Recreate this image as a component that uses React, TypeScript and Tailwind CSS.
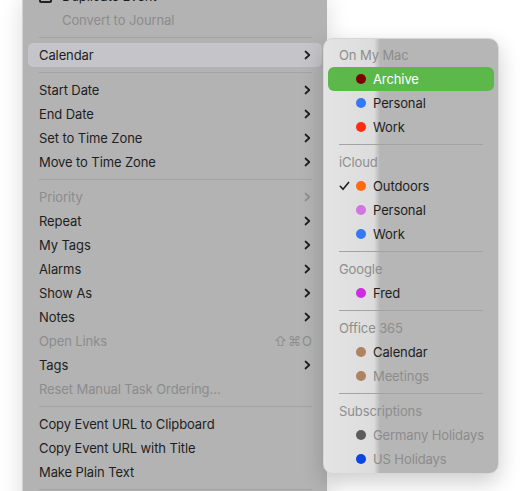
import clsx from "clsx"

const font = "font-['Inter','Liberation_Sans',sans-serif]"

function Chevron({ dim }: { dim?: boolean }) {
  return (
    <svg width="7" height="10" viewBox="0 0 7 10" className="shrink-0">
      <polyline
        points="1.5,1.5 5.3,5 1.5,8.5"
        fill="none"
        stroke={dim ? "#8f8f8f" : "#1e1e1e"}
        strokeWidth="1.7"
        strokeLinecap="round"
        strokeLinejoin="round"
      />
    </svg>
  )
}

function Item({
  label,
  disabled,
  sub,
  shortcut,
  active,
  indent,
  icon,
  className,
}: {
  label: string
  disabled?: boolean
  sub?: boolean
  shortcut?: string
  active?: boolean
  indent?: boolean
  icon?: boolean
  className?: string
}) {
  return (
    <div
      className={clsx(
        "ml-[6px] mr-[5px] flex h-6 shrink-0 items-center rounded-[5px] pl-[11px] pr-[11px]",
        active && "bg-[#c5c5c9]",
        className
      )}
    >
      {icon && (
        <div className="mr-[10px] h-[13px] w-[13px] rounded-[2px] border-2 border-[#222]" />
      )}
      <span
        className={clsx(
          "flex-1 text-[13px] leading-none tracking-[-0.1px]",
          indent && !icon && "pl-[23px]",
          disabled ? "text-[#8c8c8c]" : "text-[#1e1e1e]"
        )}
      >
        {label}
      </span>
      {sub && <Chevron dim={disabled} />}
      {shortcut && (
        <span className="mr-[-2px] text-[13px] leading-none tracking-[1px] text-[#8e8e8e]">
          {shortcut}
        </span>
      )}
    </div>
  )
}

function Sep() {
  return <div className="ml-[17px] mr-[15px] my-[5px] h-px shrink-0 bg-[#a3a3a3]" />
}

function SubHeader({ label }: { label: string }) {
  return (
    <div className="flex h-6 items-center pl-[15px] text-[13px] leading-none tracking-[-0.1px] text-[#8d8d8d]">
      {label}
    </div>
  )
}

function SubItem({
  label,
  color,
  active,
  checked,
  disabled,
}: {
  label: string
  color: string
  active?: boolean
  checked?: boolean
  disabled?: boolean
}) {
  return (
    <div
      className={clsx(
        "mx-[4px] flex h-6 items-center rounded-[6px]",
        active && "bg-[#5cb84b]"
      )}
    >
      <div className="flex w-[23px] justify-end pr-[1px]">
        {checked && (
          <svg width="11" height="10" viewBox="0 0 11 10">
            <polyline
              points="1.3,5.3 4,8.3 9.6,1.4"
              fill="none"
              stroke="#1e1e1e"
              strokeWidth="1.6"
              strokeLinecap="round"
              strokeLinejoin="round"
            />
          </svg>
        )}
      </div>
      <div className="ml-[5px] h-[10px] w-[10px] rounded-full" style={{ backgroundColor: color }} />
      <span
        className={clsx(
          "ml-[7px] text-[13px] leading-none tracking-[-0.1px]",
          active ? "text-white" : disabled ? "text-[#8c8c8c]" : "text-[#1e1e1e]"
        )}
      >
        {label}
      </span>
    </div>
  )
}

function SubSep() {
  return <div className="mx-[15px] my-[5px] h-px bg-[#a3a3a3]" />
}

function CalendarMenu() {
  return (
    <div className="absolute left-[323px] top-[38px] h-[436px] w-[176px] overflow-hidden rounded-[10px] border border-[#d6d6d6] bg-[linear-gradient(to_right,#e4e4e4_0px,#dcdcdc_50px,#b6b6b6_56px)] pt-[4px] shadow-[0_8px_22px_rgba(0,0,0,0.2)]">
      <SubHeader label="On My Mac" />
      <SubItem label="Archive" color="#7d0000" active />
      <SubItem label="Personal" color="#3478f6" />
      <SubItem label="Work" color="#ff2d0f" />
      <SubSep />
      <SubHeader label="iCloud" />
      <SubItem label="Outdoors" color="#ff6a10" checked />
      <SubItem label="Personal" color="#d274e2" />
      <SubItem label="Work" color="#3478f6" />
      <SubSep />
      <SubHeader label="Google" />
      <SubItem label="Fred" color="#cc2fe0" />
      <SubSep />
      <SubHeader label="Office 365" />
      <SubItem label="Calendar" color="#ad8360" />
      <SubItem label="Meetings" color="#ad8360" disabled />
      <SubSep />
      <SubHeader label="Subscriptions" />
      <SubItem label="Germany Holidays" color="#5c5c5c" disabled />
      <SubItem label="US Holidays" color="#0a46e6" disabled />
    </div>
  )
}

export default function App() {
  return (
    <div className={clsx("relative h-[491px] w-[522px] overflow-hidden bg-white", font)}>
      <div className="ml-[22px] flex h-[520px] w-[305px] flex-col bg-[#b3b3b3] shadow-[inset_1px_0_0_#d2d2d2,0_0_22px_rgba(0,0,0,0.14)]">
        <Item label="Duplicate Event" icon indent className="-mt-[16px]" />
        <Item label="Convert to Journal" indent disabled />
        <Sep />
        <Item label="Calendar" sub active />
        <Sep />
        <Item label="Start Date" sub />
        <Item label="End Date" sub />
        <Item label="Set to Time Zone" sub />
        <Item label="Move to Time Zone" sub />
        <Sep />
        <Item label="Priority" sub disabled />
        <Item label="Repeat" sub />
        <Item label="My Tags" sub />
        <Item label="Alarms" sub />
        <Item label="Show As" sub />
        <Item label="Notes" sub />
        <Item label="Open Links" shortcut="⇧⌘O" disabled />
        <Item label="Tags" sub />
        <Item label="Reset Manual Task Ordering…" disabled />
        <Sep />
        <Item label="Copy Event URL to Clipboard" />
        <Item label="Copy Event URL with Title" />
        <Item label="Make Plain Text" />
        <Sep />
      </div>
      <CalendarMenu />
    </div>
  )
}
